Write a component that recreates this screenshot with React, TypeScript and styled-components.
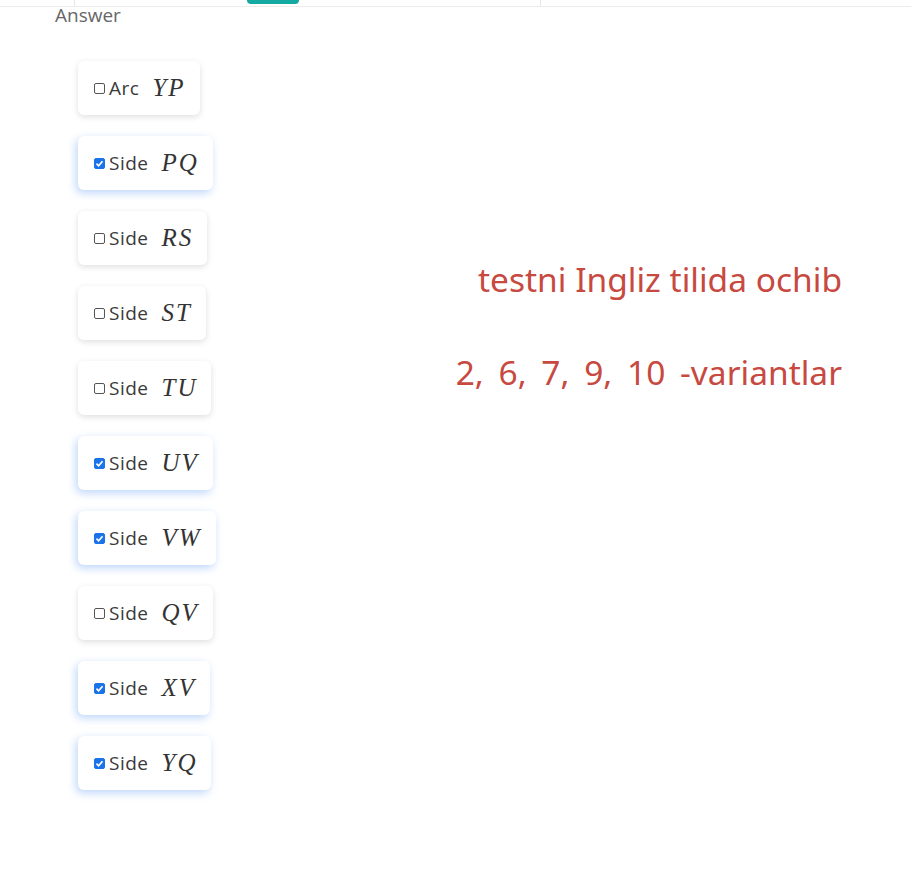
import React from "react";
import styled, { createGlobalStyle } from "styled-components";

const Global = createGlobalStyle`
  html, body { margin: 0; padding: 0; background: #fff; }
  body { font-family: "Open Sans", "Noto Sans", sans-serif; }
`;

const Page = styled.div`
  width: 911px;
  height: 878px;
  overflow: hidden;
  background: #fff;
`;

const TopBar = styled.div`
  height: 6px;
  border-bottom: 1px solid #ececec;
  display: grid;
  grid-template-columns: 75px 172px 52px 242px 1fr;
`;

const Seg = styled.div<{ $divider?: boolean; $active?: boolean }>`
  border-right: ${(p) => (p.$divider ? "1px solid #e6e6e6" : "none")};
  ${(p) =>
    p.$active
      ? `background: #14aaa2; height: 4px; border-radius: 0 0 5px 5px;`
      : ""}
`;

const Label = styled.div`
  margin: 0 0 0 55px;
  font-size: 19px;
  line-height: 16px;
  color: #666;
`;

const Body = styled.div`
  display: grid;
  grid-template-columns: 300px 1fr;
`;

const List = styled.div`
  display: flex;
  flex-direction: column;
  align-items: flex-start;
  gap: 21px;
  padding: 38px 0 0 78px;
`;

const Card = styled.div<{ $checked: boolean }>`
  height: 54px;
  box-sizing: border-box;
  display: flex;
  align-items: center;
  padding: 0 14px 0 16px;
  background: #fff;
  border-radius: 6px;
  box-shadow: ${(p) =>
    p.$checked
      ? "-2px 3px 8px rgba(90,150,245,0.4)"
      : "0 2px 6px rgba(0,0,0,0.13)"};
`;

const Box = styled.span<{ $checked: boolean }>`
  width: 11px;
  height: 11px;
  box-sizing: border-box;
  border-radius: 2px;
  border: 1px solid ${(p) => (p.$checked ? "#1a73e8" : "#555")};
  background: ${(p) => (p.$checked ? "#1a73e8" : "#fff")};
  display: inline-flex;
  align-items: center;
  justify-content: center;
  margin-right: 4px;
  flex: none;
`;

const Word = styled.span`
  font-size: 19px;
  color: #3a3a3a;
  letter-spacing: 0.5px;
  margin-right: 13px;
`;

const Math = styled.span`
  font-family: "Liberation Serif", "DejaVu Serif", serif;
  font-style: italic;
  font-size: 25px;
  color: #333;
  letter-spacing: 2px;
`;

const Note = styled.div`
  display: flex;
  flex-direction: column;
  align-items: flex-end;
  padding: 236px 69px 0 0;
  gap: 53px;
`;

const NoteLine = styled.div`
  font-family: "Noto Sans", "Open Sans", sans-serif;
  font-size: 33.5px;
  line-height: 40px;
  color: #c7493f;
  white-space: pre;
`;

const Numbers = styled(NoteLine)`
  word-spacing: 6px;
`;

const items: { word: string; math: string; checked: boolean }[] = [
  { word: "Arc", math: "YP", checked: false },
  { word: "Side", math: "PQ", checked: true },
  { word: "Side", math: "RS", checked: false },
  { word: "Side", math: "ST", checked: false },
  { word: "Side", math: "TU", checked: false },
  { word: "Side", math: "UV", checked: true },
  { word: "Side", math: "VW", checked: true },
  { word: "Side", math: "QV", checked: false },
  { word: "Side", math: "XV", checked: true },
  { word: "Side", math: "YQ", checked: true },
];

export default function App() {
  return (
    <Page>
      <Global />
      <TopBar>
        <Seg $divider />
        <Seg />
        <Seg $active />
        <Seg $divider />
        <Seg />
      </TopBar>
      <Label>Answer</Label>
      <Body>
        <List>
          {items.map((it, i) => (
            <Card key={i} $checked={it.checked}>
              <Box $checked={it.checked}>
                {it.checked && (
                  <svg width="9" height="9" viewBox="0 0 8 8">
                    <path d="M1.3 4.2 L3.2 6 L6.7 2" fill="none" stroke="#fff" strokeWidth="1.5" />
                  </svg>
                )}
              </Box>
              <Word>{it.word}</Word>
              <Math>{it.math}</Math>
            </Card>
          ))}
        </List>
        <Note>
          <NoteLine>testni Ingliz tilida ochib</NoteLine>
          <Numbers>{"2, 6, 7, 9, 10 -variantlar"}</Numbers>
        </Note>
      </Body>
    </Page>
  );
}
